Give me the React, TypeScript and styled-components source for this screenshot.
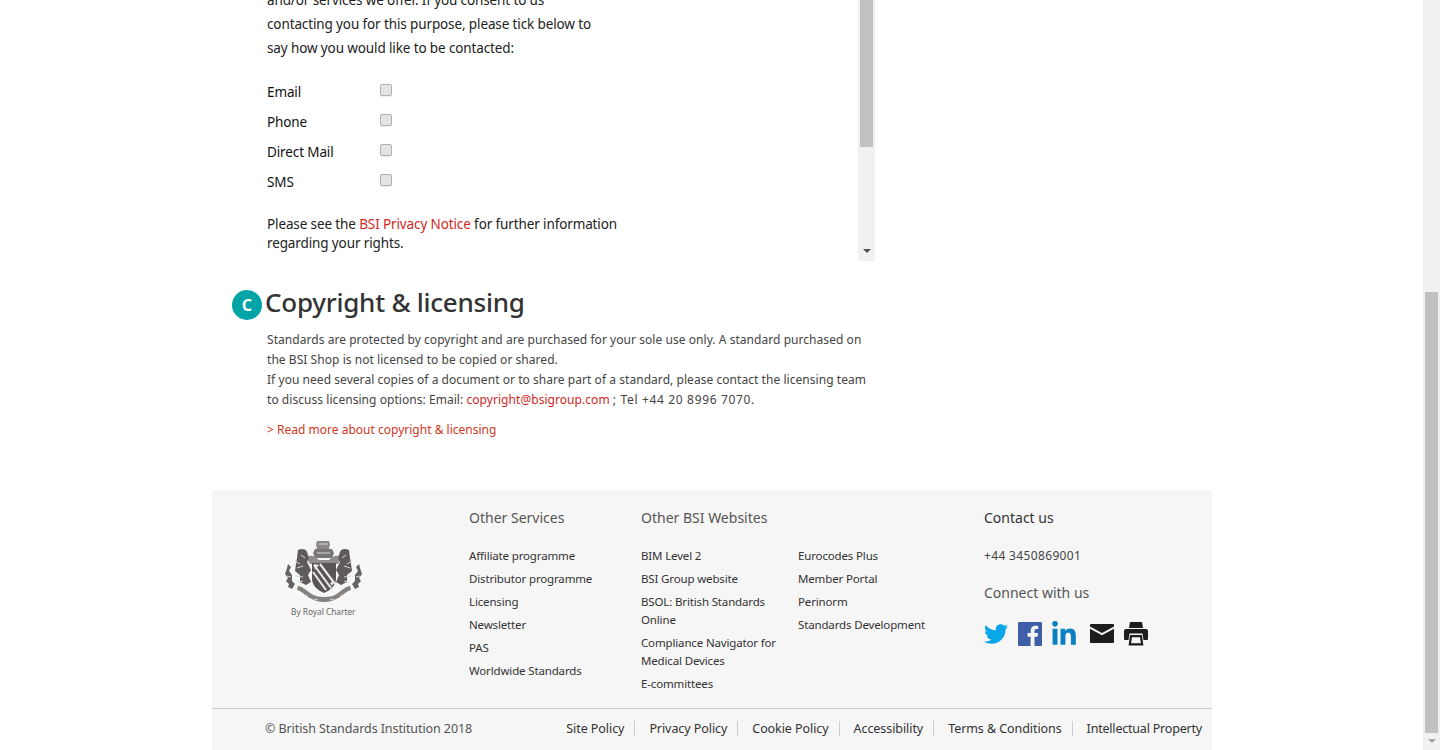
import React from "react";
import styled, { createGlobalStyle } from "styled-components";
import { FaTwitter, FaLinkedinIn } from "react-icons/fa";

const Global = createGlobalStyle`
  html, body { margin: 0; padding: 0; background: #fff; overflow: hidden; }
  body { font-family: "Noto Sans", "Liberation Sans", sans-serif; }
  a { text-decoration: none; color: inherit; }
`;
const Viewport = styled.div`display: flex; width: 1440px; height: 750px; overflow: hidden;`;
const Page = styled.div`flex: 0 0 1423px; height: 750px; overflow: hidden; padding-left: 212px; box-sizing: border-box;`;
const Column = styled.div`width: 1000px;`;
const Track = styled.div<{ $top: number }>`
  flex: 0 0 17px; width: 17px; background: #f1f1f1; display: flex; flex-direction: column; align-items: center;
  padding-top: ${(p) => p.$top}px; box-sizing: border-box; height: 100%;
`;
const Thumb = styled.div<{ $h: number }>`width: 13px; height: ${(p) => p.$h}px; background: #c1c1c1; flex: none;`;
const Arrow = styled.div<{ $dark?: boolean; $gap: number }>`
  width: 0; height: 0; margin-top: ${(p) => p.$gap}px;
  border-left: 4px solid transparent; border-right: 4px solid transparent;
  border-top: 4px solid ${(p) => (p.$dark ? "#505050" : "#a3a3a3")};
`;
const FormPanel = styled.div`display: flex; height: 261px; margin-left: 55px; width: 608px;`;
const FormBody = styled.div`
  flex: 0 0 591px; overflow: hidden; font-size: 13.5px; color: #222; letter-spacing: -0.12px;
`;
const Intro = styled.p`margin: -12px 0 0; line-height: 24px; width: 330px;`;
const OptionList = styled.div`margin-top: 14px;`;
const Option = styled.label`display: flex; height: 30px; align-items: center;`;
const OptionName = styled.span`flex: 0 0 113px; color: #111; position: relative; top: 3px;`;
const Check = styled.input`
  appearance: none; margin: 0; width: 12px; height: 12px; border: 1px solid #b0b0b0; border-radius: 2px;
  background: #e4e4e4; box-shadow: 0 1px 0 #eee; position: relative; top: 1px;
`;
const Notice = styled.p`margin: 21px 0 0; line-height: 19px; width: 360px;`;
const RedLink = styled.a`color: #d0281e;`;
const Section = styled.section`padding: 25px 0 0 20px;`;
const Heading = styled.div`display: flex; align-items: center; height: 36px;`;
const Badge = styled.span`
  width: 30px; height: 30px; border-radius: 50%; background: #00a3a6; color: #fff; font-weight: 700; font-size: 16px;
  display: flex; align-items: center; justify-content: center; margin-top: 2px; margin-right: 3px;
`;
const Title = styled.h2`margin: 0 0 4px 0; font-weight: 500; font-size: 26px; letter-spacing: -0.25px; color: #333; line-height: 36px;`;
const Copy = styled.p`
  margin: 8px 0 0 35px; width: 605px; font-size: 12px; line-height: 20px; color: #444; letter-spacing: 0.05px;
`;
const Tel = styled.span`letter-spacing: 0.66px;`;
const More = styled.a`display: block; margin: 10px 0 0 35px; font-size: 12px; line-height: 20px; color: #d0381e; letter-spacing: 0.01px;`;
const Footer = styled.footer`margin-top: 50px; background: #f6f6f6; height: 260px; display: flex; flex-direction: column;`;
const FooterMain = styled.div`display: flex; box-sizing: border-box; border-bottom: 1px solid #ccc; height: 219px;`;
const LogoCol = styled.div`flex: 0 0 257px; display: flex; flex-direction: column; align-items: flex-start; padding: 50px 0 0 72px; box-sizing: border-box;`;
const Charter = styled.span`font-size: 8.3px; color: #666; margin: 0 0 0 7px; line-height: 12px;`;
const ServicesCol = styled.div`flex: 0 0 172px; padding-top: 18px;`;
const SitesCol = styled.div`flex: 0 0 343px; padding-top: 18px;`;
const ContactCol = styled.div`padding-top: 18px;`;
const ColTitle = styled.h4<{ $dark?: boolean }>`
  margin: 0; font-weight: 400; font-size: 14px; line-height: 20px; letter-spacing: 0;
  color: ${(p) => (p.$dark ? "#333" : "#555")};
`;
const LinkColumns = styled.div`display: flex; gap: 12px; margin-top: 19px;`;
const LinkList = styled.ul<{ $w?: number }>`
  list-style: none; margin: 19px 0 0; padding: 0; width: ${(p) => p.$w ?? 150}px;
  ${LinkColumns} & { margin-top: 0; }
`;
const LinkItem = styled.li`
  font-size: 11.5px; line-height: 18px; margin-bottom: 5px; color: #333; letter-spacing: -0.15px;
`;
const Phone = styled.div`margin-top: 18px; font-size: 12px; line-height: 20px; color: #444; letter-spacing: 0.35px;`;
const Connect = styled(ColTitle)`margin-top: 17px;`;
const Socials = styled.div`display: flex; gap: 10px; margin-top: 19px; align-items: center;`;
const IconSlot = styled.span<{ $push?: boolean }>`
  flex: 0 0 24px; width: 24px; height: 24px; display: flex; align-items: center; justify-content: center;
  margin-left: ${(p) => (p.$push ? 4 : 0)}px;
`;
const Legal = styled.div`display: flex; justify-content: space-between; align-items: center; padding: 0 10px 0 53px; height: 41px;`;
const CopyText = styled.span`font-size: 12.5px; color: #555; letter-spacing: -0.09px; position: relative; top: -1px;`;
const LegalLinks = styled.nav`display: flex; padding-bottom: 2px;`;
const LegalLink = styled.a`
  font-size: 12.5px; line-height: 15px; color: #333; padding: 0 10px 0 14px; border-right: 1px solid #ccc; letter-spacing: -0.07px;
  &:last-child { border-right: 0; padding-right: 0; letter-spacing: -0.2px; }
`;

const Facebook = () => (
  <svg width="24" height="24" viewBox="0 0 24 24">
    <rect width="24" height="24" rx="1.200" fill="#3f5ea8" />
    <path d="M16.500 24v-9.300h3.100l.5-3.600h-3.600V8.800c0-1 .3-1.800 1.800-1.800h1.900V3.800c-.3 0-1.500-.1-2.800-.1-2.800 0-4.700 1.700-4.700 4.800v2.600H9.500v3.600h3.100V24z" fill="#f6f6f6" />
  </svg>
);
const Mail = () => (
  <svg width="24" height="24" viewBox="0 0 24 24">
    <path d="M1 2h22a1 1 0 0 1 1 1v1.500L12 11 0 4.500V3a1 1 0 0 1 1-1z" fill="#1d1d1d" />
    <path d="M0 6.800l12 6.500 12-6.500V20a1 1 0 0 1-1 1H1a1 1 0 0 1-1-1z" fill="#1d1d1d" />
  </svg>
);
const Printer = () => (
  <svg width="24" height="24" viewBox="0 0 24 24" fill="#1d1d1d">
    <path d="M6 0h12l1 6H5z" />
    <path d="M2 7h20a2 2 0 0 1 2 2v8a1 1 0 0 1-1 1h-3.500l-1-6.500h-13l-1 6.500H1a1 1 0 0 1-1-1V9a2 2 0 0 1 2-2z" />
    <path fillRule="evenodd" d="M6 13h12l1.400 10.500H4.600zM8 15.200l-.9 6h9.800l-.9-6z" />
  </svg>
);
const Crest = () => (
  <svg width="80" height="66" viewBox="0 0 80 66" style={{ display: "block", filter: "blur(0.5px)" }}>
    <g fill="#6f6b6c">
      <path d="M33 1h12l1 3-1 5H33l-1-5z" fill="#8b8788" />
      <path d="M31 9h17l2 4-2 5H31l-2-5z" fill="#7a7677" />
      <path d="M22 17c6-3 10 0 13 3h10c3-3 7-6 13-3l-4 7H26z" fill="#908c8d" />
      <path d="M14 10c4-2 8-1 9 2l2 6-2 4 4 8-3 5 3 7-5 3-6-3v-7l-5-4 1-7 1-6z" fill="#5f5b5c" />
      <path d="M65 10c-4-2-8-1-9 2l-2 6 2 4-4 8 3 5-3 7 5 3 6-3v-7l5-4-1-7-1-6z" fill="#5f5b5c" />
      <path d="M4 24l3 3-2 4 3 4 0 6 3 3-3 5-4-2 1-3-3-3 2-3-3-4 2-6z" fill="#666263" />
      <path d="M75 24l-3 3 2 4-3 4 0 6-3 3 3 5 4-2-1-3 3-3-2-3 3-4-2-6z" fill="#666263" />
      <path d="M14 46c4 0 8 4 12 7 5 3 8 4 14 4s10-1 14-4c4-3 8-7 12-7l1 4c-4 1-7 4-11 7-5 3-10 5-16 5s-11-2-16-5c-4-3-7-6-11-7z" fill="#86827f" />
    </g>
    <g stroke="#d8d6d6" strokeWidth="1" fill="none">
      <path d="M11 21l5 3M13 28l6-2M12 36l7 1M17 15l4 3M14 42l5-1M3 36l4 1" />
      <path d="M68 21l-5 3M66 28l-6-2M67 36l-7 1M62 15l-4 3M65 42l-5-1M76 36l-4 1" />
      <path d="M20 55l4 1M30 59l4 1M46 60l4-1M56 56l4-1M35 4h9M33 13h13" />
    </g>
    <path d="M28 23h24v16c0 7-7 12-12 14-5-2-12-7-12-14z" fill="#595556" />
    <g stroke="#ebe9e9" strokeWidth="2.1">
      <path d="M30 25l17 23" />
      <path d="M29 32l13 18" />
      <path d="M36 24l15 20" />
    </g>
    <path d="M30 24l5 1-4 5z" fill="#ebe9e9" />
    <path d="M46 43l4-2-2 5z" fill="#ebe9e9" />
  </svg>
);

const services = ["Affiliate programme", "Distributor programme", "Licensing", "Newsletter", "PAS", "Worldwide Standards"];
const sitesA = ["BIM Level 2", "BSI Group website", "BSOL: British Standards Online", "Compliance Navigator for Medical Devices", "E-committees"];
const sitesB = ["Eurocodes Plus", "Member Portal", "Perinorm", "Standards Development"];
const legal = ["Site Policy", "Privacy Policy", "Cookie Policy", "Accessibility", "Terms & Conditions", "Intellectual Property"];

export default function App() {
  return (
    <Viewport>
      <Global />
      <Page>
        <Column>
          <FormPanel>
            <FormBody>
              <Intro>
                and/or services we offer. If you consent to us contacting you for this purpose, please tick below to say how you would like to be contacted:
              </Intro>
              <OptionList>
                {["Email", "Phone", "Direct Mail", "SMS"].map((o) => (
                  <Option key={o}>
                    <OptionName>{o}</OptionName>
                    <Check type="checkbox" />
                  </Option>
                ))}
              </OptionList>
              <Notice>
                Please see the <RedLink href="#">BSI Privacy Notice</RedLink> for further information regarding your rights.
              </Notice>
            </FormBody>
            <Track $top={0}>
              <Thumb $h={147} />
              <Arrow $dark $gap={102} />
            </Track>
          </FormPanel>
          <Section>
            <Heading>
              <Badge>C</Badge>
              <Title>Copyright &amp; licensing</Title>
            </Heading>
            <Copy>
              Standards are protected by copyright and are purchased for your sole use only. A standard purchased on the BSI Shop is not licensed to be copied or shared.
              <br />
              If you need several copies of a document or to share part of a standard, please contact the licensing team to discuss licensing options: Email: <RedLink href="#">copyright@bsigroup.com</RedLink> <Tel>; Tel +44 20 8996 7070.</Tel>
            </Copy>
            <More href="#">&gt; Read more about copyright &amp; licensing</More>
          </Section>
          <Footer>
            <FooterMain>
              <LogoCol>
                <Crest />
                <Charter>By Royal Charter</Charter>
              </LogoCol>
              <ServicesCol>
                <ColTitle>Other Services</ColTitle>
                <LinkList>
                  {services.map((s) => <LinkItem key={s}>{s}</LinkItem>)}
                </LinkList>
              </ServicesCol>
              <SitesCol>
                <ColTitle>Other BSI Websites</ColTitle>
                <LinkColumns>
                  <LinkList $w={145}>
                    {sitesA.map((s) => <LinkItem key={s}>{s}</LinkItem>)}
                  </LinkList>
                  <LinkList $w={170}>
                    {sitesB.map((s) => <LinkItem key={s}>{s}</LinkItem>)}
                  </LinkList>
                </LinkColumns>
              </SitesCol>
              <ContactCol>
                <ColTitle $dark>Contact us</ColTitle>
                <Phone>+44 3450869001</Phone>
                <Connect>Connect with us</Connect>
                <Socials>
                  <IconSlot><FaTwitter size={24} color="#09a6ea" /></IconSlot>
                  <IconSlot><Facebook /></IconSlot>
                  <IconSlot><FaLinkedinIn size={27} color="#0a7fc2" /></IconSlot>
                  <IconSlot $push><Mail /></IconSlot>
                  <IconSlot><Printer /></IconSlot>
                </Socials>
              </ContactCol>
            </FooterMain>
            <Legal>
              <CopyText>© British Standards Institution 2018</CopyText>
              <LegalLinks>
                {legal.map((l) => <LegalLink key={l} href="#">{l}</LegalLink>)}
              </LegalLinks>
            </Legal>
          </Footer>
        </Column>
      </Page>
      <Track $top={292}>
        <Thumb $h={441} />
        <Arrow $gap={6} />
      </Track>
    </Viewport>
  );
}
